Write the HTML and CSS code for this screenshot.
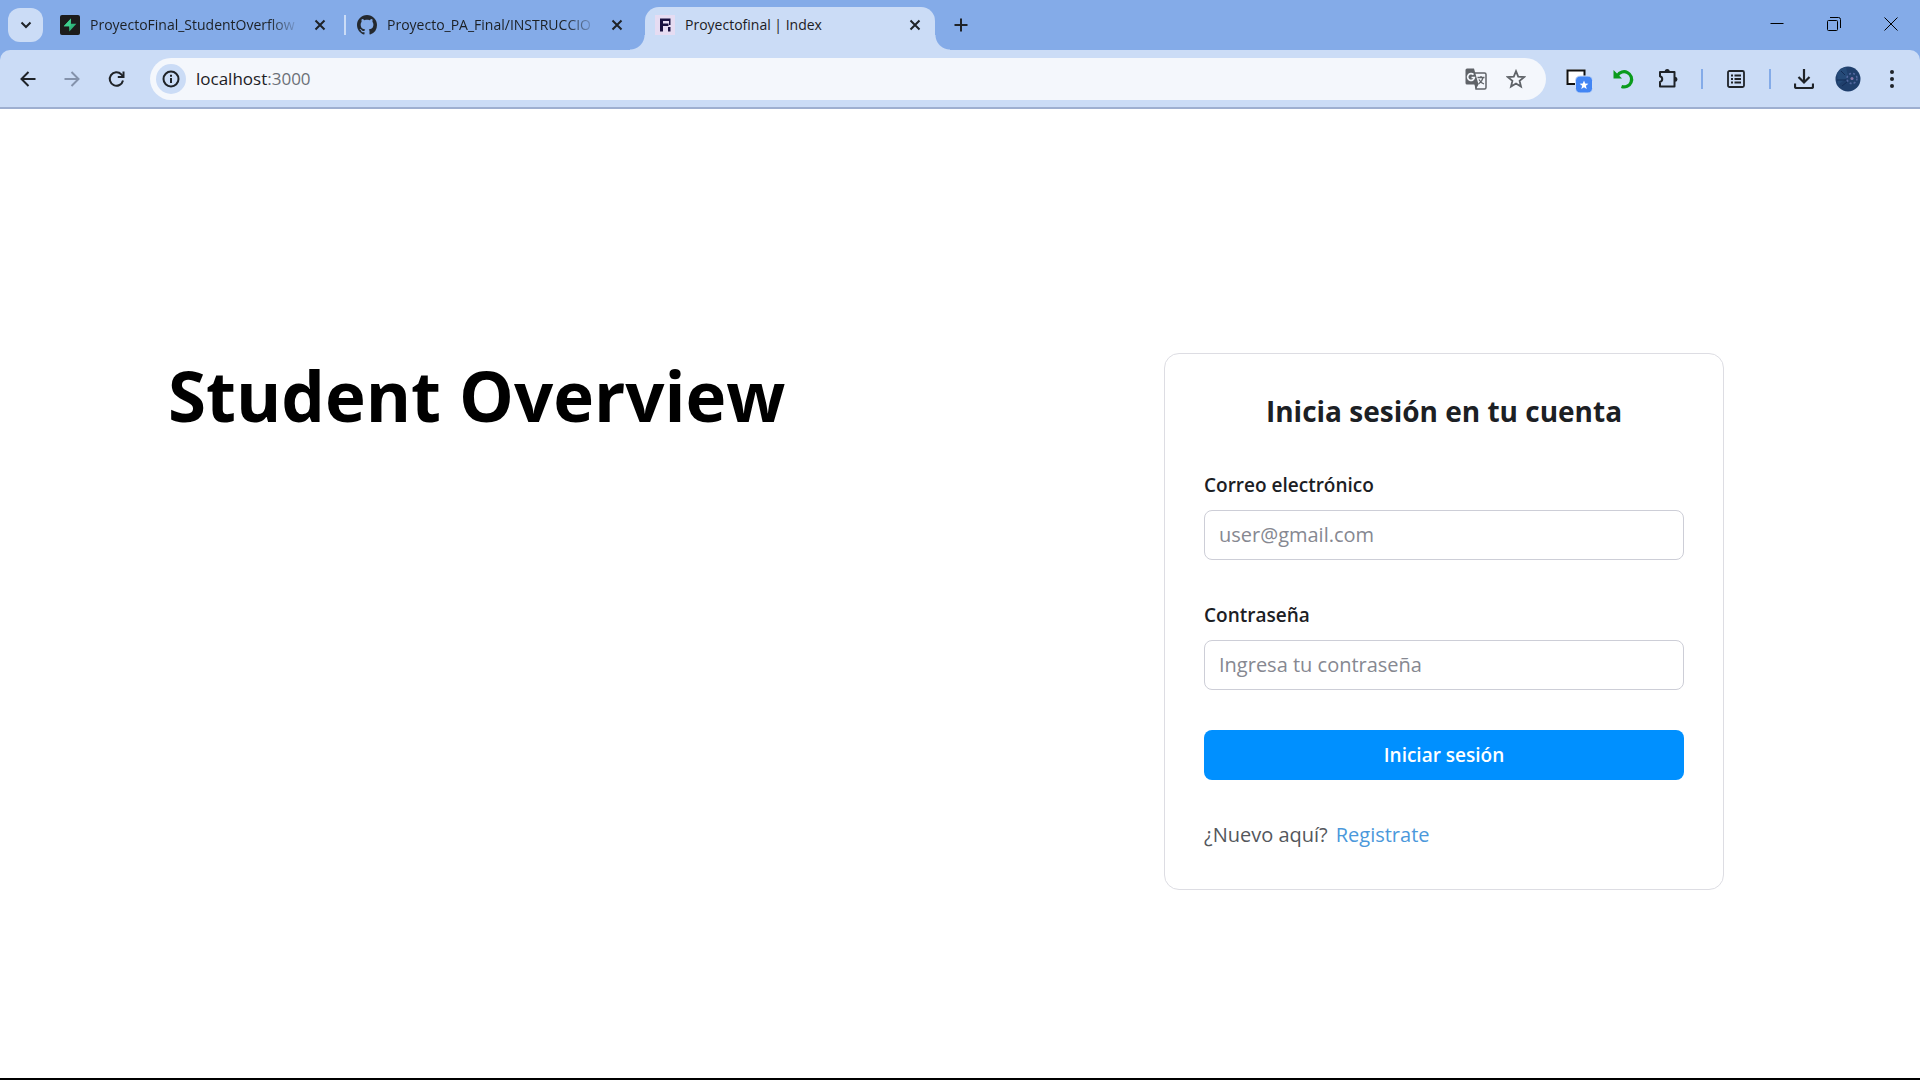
FILE: index.html
```html
<!DOCTYPE html>
<html lang="es">
<head>
<meta charset="utf-8">
<meta name="viewport" content="width=device-width, initial-scale=1">
<title>Proyectofinal | Index</title>
<link rel="stylesheet" href="styles.css">
</head>
<body>
<div class="window">
  <header class="chrome">
    <div class="tabstrip">
      <button class="tab-search" aria-label="Buscar pestañas"><svg width="12" height="12" viewBox="0 0 12 12" fill="none" stroke="currentColor" stroke-width="2"><path d="M1.500 3.500 6 8l4.500-4.500"/></svg></button>
      <div class="tab">
        <svg class="favicon" width="20" height="20" viewBox="0 0 20 20"><rect width="20" height="20" rx="2" fill="#1c1c1c"/><path d="M11 3.500 3.800 11.200H10z" fill="#3ecf8e"/><path d="M9.300 16.500 16.400 8.800H10z" fill="#2fb57b"/><path d="M11 3.500 3.800 11.200h5.500v5.300l1.500-7.700z" fill="#3ecf8e"/></svg>
        <span class="tab-title tab-title-faded">ProyectoFinal_StudentOverflow</span>
        <button class="tab-close" aria-label="Cerrar pestaña"><svg width="12" height="12" viewBox="0 0 12 12" stroke="currentColor" stroke-width="2"><path d="m1.500 1.500 9 9m0-9-9 9"/></svg></button>
      </div>
      <span class="tab-divider"></span>
      <div class="tab">
        <svg class="favicon" width="20" height="20" viewBox="0 0 16 16"><path fill="#24292f" d="M8 0C3.580 0 0 3.580 0 8c0 3.540 2.290 6.530 5.470 7.590.4.070.55-.17.55-.38 0-.19-.01-.82-.01-1.490-2.010.37-2.530-.49-2.690-.94-.09-.23-.48-.94-.82-1.130-.28-.15-.68-.52-.01-.53.63-.01 1.080.58 1.230.82.72 1.210 1.870.87 2.330.66.070-.52.28-.87.51-1.070-1.780-.2-3.640-.89-3.640-3.950 0-.87.31-1.590.82-2.150-.08-.2-.36-1.020.08-2.120 0 0 .67-.21 2.200.82.64-.18 1.320-.27 2-.27s1.360.09 2 .27c1.530-1.040 2.200-.82 2.200-.82.44 1.100.16 1.920.08 2.120.51.56.82 1.270.82 2.150 0 3.070-1.870 3.750-3.650 3.950.29.25.54.73.54 1.480 0 1.070-.01 1.930-.01 2.200 0 .21.15.46.55.38A8.010 8.010 0 0 0 16 8c0-4.420-3.580-8-8-8"/></svg>
        <span class="tab-title tab-title-faded">Proyecto_PA_Final/INSTRUCCIO</span>
        <button class="tab-close" aria-label="Cerrar pestaña"><svg width="12" height="12" viewBox="0 0 12 12" stroke="currentColor" stroke-width="2"><path d="m1.500 1.500 9 9m0-9-9 9"/></svg></button>
      </div>
      <div class="tab tab-active">
        <svg class="favicon" width="20" height="20" viewBox="0 0 20 20"><rect width="20" height="20" fill="#e6dcf2"/><path fill="#1a1240" d="M5 3.500h10.500v6.500H14V6H8v2.500h5.500v2.500H8v5.500H5zM13 12h2.500v4.500H13z"/></svg>
        <span class="tab-title">Proyectofinal | Index</span>
        <button class="tab-close" aria-label="Cerrar pestaña"><svg width="12" height="12" viewBox="0 0 12 12" stroke="currentColor" stroke-width="2"><path d="m1.500 1.500 9 9m0-9-9 9"/></svg></button>
      </div>
      <button class="new-tab" aria-label="Nueva pestaña"><svg width="14" height="14" viewBox="0 0 14 14" stroke="currentColor" stroke-width="2"><path d="M7 .5v13M.5 7h13"/></svg></button>
      <div class="window-controls">
        <button class="window-button" aria-label="Minimizar"><svg width="14" height="14" viewBox="0 0 14 14" stroke="#000"><path d="M.5 6.500h13"/></svg></button>
        <button class="window-button" aria-label="Restaurar"><svg width="14" height="14" viewBox="0 0 14 14" fill="none" stroke="#000"><rect x=".5" y="3.500" width="10" height="10" rx="1"/><path d="M3 .5h8.500a2 2 0 0 1 2 2V11"/></svg></button>
        <button class="window-button" aria-label="Cerrar"><svg width="14" height="14" viewBox="0 0 14 14" stroke="#000"><path d="m.5.5 13 13m0-13-13 13"/></svg></button>
      </div>
    </div>
    <div class="toolbar">
      <button class="tool" aria-label="Atrás"><svg width="16" height="16" viewBox="0 0 16 16" fill="none" stroke="currentColor" stroke-width="2"><path d="M15.500 8H2M8.500 1 1.500 8l7 7"/></svg></button>
      <button class="tool tool-disabled" aria-label="Adelante"><svg width="16" height="16" viewBox="0 0 16 16" fill="none" stroke="currentColor" stroke-width="2"><path d="M.5 8H14M7.500 1l7 7-7 7"/></svg></button>
      <button class="tool" aria-label="Recargar"><svg width="18" height="18" viewBox="0 0 18 18" fill="none" stroke="currentColor" stroke-width="2"><path d="M16 10.500A6.700 6.700 0 1 1 14.300 4.400l1.700 1.800"/><path d="M16.500 1.500v5.600H10.800"/></svg></button>
      <div class="omnibox">
        <button class="site-info" aria-label="Información del sitio"><svg width="18" height="18" viewBox="0 0 18 18" fill="none" stroke="currentColor" stroke-width="2"><circle cx="9" cy="9" r="7.500"/><path d="M9 8v5M9 4.800v2"/></svg></button>
        <span class="url">localhost<span class="url-port">:3000</span></span>
        <button class="omni-button" aria-label="Traducir"><svg width="22" height="22" viewBox="0 0 22 22"><path d="M9 5h10.500A1.500 1.500 0 0 1 21 6.500v13a1.500 1.500 0 0 1-1.500 1.500H11z" fill="#f4f7fc" stroke="#5f6368" stroke-width="1.500"/><path d="M2 .5h7l4.500 16H2A1.500 1.500 0 0 1 .5 15V2A1.500 1.500 0 0 1 2 .5zM9.500 16.500h4L11 21z" fill="#5f6368"/><path d="M8.500 6.700A3.400 3.400 0 1 0 9.400 9.500H6.500" fill="none" stroke="#f4f7fc" stroke-width="1.700"/><path d="M12.500 9.500h7M16 8v1.500M18 9.500c-.5 3-2.500 5-4.500 6.500M14 11.500c1 2 2.500 3.500 5 4.500" fill="none" stroke="#5f6368" stroke-width="1.300"/></svg></button>
        <button class="omni-button" aria-label="Añadir a marcadores"><svg width="20" height="20" viewBox="0 0 20 20" fill="none" stroke="#5f6368" stroke-width="1.800"><path d="m10 2.200 2.200 5.500 5.900.4-4.500 3.800 1.400 5.700-5-3.100-5 3.100 1.400-5.700L1.900 8.100l5.900-.4z"/></svg></button>
      </div>
      <button class="tool" aria-label="Extensión de ventanas"><svg width="28" height="28" viewBox="0 0 28 28"><rect x=".5" y="4.500" width="18.500" height="15" rx="1" fill="#f3f3f3"/><rect x="1.500" y="5.500" width="17" height="13.500" fill="#fff" stroke="#111" stroke-width="2"/><rect x="9.500" y="11" width="17" height="17" rx="4.500" fill="#4285f4" stroke="#cdddf6"/><path d="m18 15.500 1.200 3 3.200.2-2.500 2.100.8 3.200-2.700-1.800-2.700 1.800.8-3.200-2.500-2.100 3.200-.2z" fill="#fff"/></svg></button>
      <button class="tool" aria-label="Deshacer"><svg width="22" height="22" viewBox="0 0 22 22" fill="none"><path d="M4.500 7.500A7.600 7.600 0 1 1 8.500 18.500" stroke="#0a9b1c" stroke-width="3.200"/><path d="M.5 2v8.500H9z" fill="#0a9b1c"/></svg></button>
      <button class="tool" aria-label="Extensiones"><svg width="22" height="22" viewBox="0 0 22 22"><path d="M3 4h14.500v14.500H3v-4.500a3 3 0 0 0 0-5.800z" fill="none" stroke="currentColor" stroke-width="2" stroke-linejoin="round"/><path d="M7.700 3.500a2.500 2.500 0 0 1 5 0zM18 8.800a2.500 2.500 0 0 1 0 5z" fill="currentColor"/></svg></button>
      <span class="tool-divider"></span>
      <button class="tool" aria-label="Lista de lectura"><svg width="18" height="18" viewBox="0 0 18 18" fill="none" stroke="currentColor" stroke-width="1.800"><rect x="1" y="1" width="16" height="16" rx="1.500"/><path d="M4 5.500h2M4 9h2M4 12.500h2M7.500 5.500H14M7.500 9H14M7.500 12.500H14"/></svg></button>
      <span class="tool-divider"></span>
      <button class="tool" aria-label="Descargas"><svg width="20" height="20" viewBox="0 0 20 20" fill="none" stroke="currentColor" stroke-width="2.200"><path d="M10 0v13M4.500 8l5.500 5.500L15.500 8M1 14.500v3a1.500 1.500 0 0 0 1.500 1.500h15a1.500 1.500 0 0 0 1.500-1.500v-3"/></svg></button>
      <button class="tool" aria-label="Perfil"><svg width="26" height="26" viewBox="0 0 26 26"><circle cx="13" cy="13" r="12.500" fill="#1f3f6c"/><path d="M2 8a12.500 12.500 0 0 1 9-7l2 10-10 8z" fill="#254a78"/><circle cx="17" cy="12.500" r="5" fill="none" stroke="#5468a0" stroke-width="1.500" stroke-dasharray="2 2"/><circle cx="17" cy="12.500" r="1.500" fill="#8a78a8"/><path d="M2 14h9M6 5l4 4M7 20l5-4" stroke="#132c56"/></svg></button>
      <button class="tool" aria-label="Menú"><svg width="4" height="18" viewBox="0 0 4 18" fill="currentColor"><circle cx="2" cy="2" r="2"/><circle cx="2" cy="9" r="2"/><circle cx="2" cy="16" r="2"/></svg></button>
    </div>
  </header>

  <main class="page">
    <h1 class="headline">Student Overview</h1>
    <form class="card">
      <h2 class="card-title">Inicia sesión en tu cuenta</h2>
      <div class="field">
        <label class="field-label" for="email">Correo electrónico</label>
        <input class="field-input" id="email" type="email" placeholder="user@gmail.com">
      </div>
      <div class="field">
        <label class="field-label" for="password">Contraseña</label>
        <input class="field-input" id="password" type="password" placeholder="Ingresa tu contraseña">
      </div>
      <button class="submit" type="submit">Iniciar sesión</button>
      <p class="signup">¿Nuevo aquí? <a class="signup-link" href="#">Registrate</a></p>
    </form>
  </main>
</div>
</body>
</html>
```

FILE: styles.css
```css
* {
  box-sizing: border-box;
}

body {
  margin: 0;
  background: #fff;
  font-family: "Open Sans", "Noto Sans", sans-serif;
  color: #1c2024;
}

button {
  display: flex;
  align-items: center;
  justify-content: center;
  flex: none;
  padding: 0;
  border: 0;
  background: none;
  color: #1f2328;
  font: inherit;
}

svg {
  display: block;
  flex: none;
}

.window {
  display: flex;
  flex-direction: column;
  min-height: 100vh;
  border-bottom: 2px solid #000;
}

/* Browser chrome */
.chrome {
  background: #84abe8;
  border-bottom: 2px solid #9eafd0;
}

.tabstrip {
  display: flex;
  align-items: flex-end;
  height: 50px;
  padding-left: 8px;
}

.tab-search {
  align-self: center;
  width: 35px;
  height: 34px;
  margin-right: 7px;
  border-radius: 12px;
  background: #cbdcf6;
}

.tab {
  display: flex;
  align-items: center;
  flex: 0 1 290px;
  min-width: 0;
  height: 43px;
  padding: 0 10px 7px;
}

.tab-title {
  flex: 1;
  min-width: 0;
  margin: 0 10px;
  overflow: hidden;
  white-space: nowrap;
  font-size: 14px;
  line-height: 20px;
}

.tab-title-faded {
  -webkit-mask-image: linear-gradient(to left, transparent, #000 32px);
  mask-image: linear-gradient(to left, transparent, #000 32px);
}

.tab-close {
  width: 20px;
  height: 20px;
}

.tab-divider {
  align-self: center;
  width: 2px;
  height: 20px;
  margin: 0 1px 0 4px;
  background: #cbdcf6;
}

.tab-active {
  position: relative;
  margin-left: 8px;
  border-radius: 14px 14px 0 0;
  background: #cbdcf6;
}

.tab-active::before,
.tab-active::after {
  content: "";
  position: absolute;
  bottom: 0;
  width: 15px;
  height: 15px;
}

.tab-active::before {
  right: 100%;
  background: radial-gradient(circle at 0 0, transparent 14px, #cbdcf6 15px);
}

.tab-active::after {
  left: 100%;
  background: radial-gradient(circle at 100% 0, transparent 14px, #cbdcf6 15px);
}

.new-tab {
  width: 36px;
  height: 50px;
  margin-left: 8px;
}

.window-controls {
  display: flex;
  align-self: flex-start;
  margin-left: auto;
  padding-right: 1px;
}

.window-button {
  width: 57px;
  height: 48px;
}

.toolbar {
  display: flex;
  align-items: center;
  height: 57px;
  padding: 0 6px;
  border-radius: 10px 10px 0 0;
  background: #cbdcf6;
}

.tool {
  width: 44px;
  height: 42px;
}

.tool-disabled {
  color: #8492ab;
}

.tool-divider {
  width: 2px;
  height: 20px;
  margin: 0 11px;
  background: #84abe8;
}

.omnibox {
  display: flex;
  align-items: center;
  flex: 1;
  height: 42px;
  margin: 0 12px;
  padding: 0 10px 0 6px;
  border-radius: 21px;
  background: #f4f7fc;
}

.site-info {
  width: 30px;
  height: 30px;
  border-radius: 50%;
  background: #cbdcf6;
}

.url {
  flex: 1;
  margin-left: 10px;
  font-size: 17px;
  line-height: 24px;
}

.url-port {
  color: #6b7077;
}

.omni-button {
  width: 40px;
  height: 40px;
}

/* Page */
.page {
  display: flex;
  flex: 1;
  align-items: center;
  justify-content: space-between;
  gap: 40px;
  padding: 55px 196px 0 168px;
  background: #fff;
}

.headline {
  align-self: flex-start;
  margin: 194px 0 0;
  color: #000;
  font-size: 69px;
  font-weight: 700;
  line-height: 75px;
}

.card {
  display: flex;
  flex-direction: column;
  gap: 40px;
  width: 560px;
  padding: 39px;
  border: 1px solid #dddde3;
  border-radius: 15px;
}

.card-title {
  margin: 0;
  text-align: center;
  font-size: 28px;
  font-weight: 700;
  line-height: 37px;
}

.field {
  display: flex;
  flex-direction: column;
  gap: 10px;
}

.field-label {
  font-size: 19px;
  font-weight: 600;
  line-height: 30px;
}

.field-input {
  width: 100%;
  height: 50px;
  padding: 0 14px;
  border: 1px solid #cdced7;
  border-radius: 8px;
  background: #fff;
  color: #1c2024;
  font: inherit;
  font-size: 20px;
}

.field-input::placeholder {
  color: #868891;
  opacity: 1;
}

.submit {
  height: 50px;
  border-radius: 8px;
  background: #0090ff;
  color: #fff;
  font-size: 19px;
  font-weight: 600;
}

.signup {
  display: flex;
  gap: 8px;
  margin: 0;
  color: #54575c;
  font-size: 20px;
  line-height: 30px;
}

.signup-link {
  color: #4b98db;
  text-decoration: none;
}
```
